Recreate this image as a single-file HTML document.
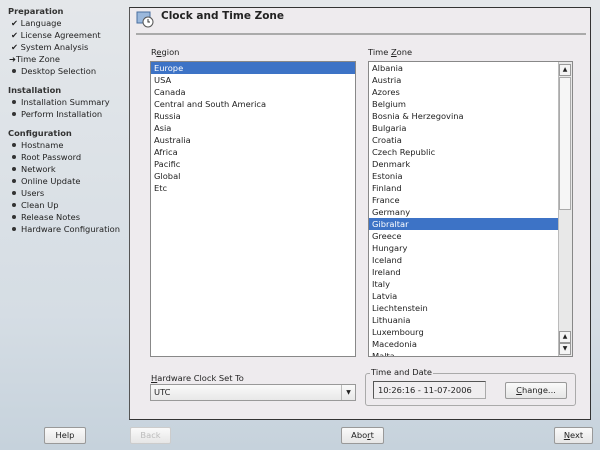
<!DOCTYPE html>
<html><head><style>
*{margin:0;padding:0;box-sizing:border-box}
body{width:600px;height:450px;position:relative;overflow:hidden;font-family:"DejaVu Sans","Liberation Sans",sans-serif;font-size:8.3px;color:#222;background:linear-gradient(#e4e7ea,#d5dde4 70%,#c6d2dc)}
.a{position:absolute;white-space:nowrap}
.side div{position:absolute;left:8px;line-height:12px}
.side b{font-weight:bold;color:#333}
.side .i{left:11px}
.side .i s{text-decoration:none;display:inline-block;width:4px;height:4px;border-radius:50%;background:#333;margin:0 5px 1px 1px;vertical-align:middle}
.panel{position:absolute;left:129px;top:7px;width:462px;height:413px;background:#eeebee;border:1px solid #333;border-left-color:#555}
.list{position:absolute;background:#fff;border:1px solid #888}
.list div{height:12px;line-height:12px;padding-left:3px}
.sel{background:#3d73c6;color:#fff}
.btn{position:absolute;height:17px;background:linear-gradient(#fafafa,#e6e6e6);border:1px solid #999;border-radius:2px;text-align:center;line-height:15px}
</style></head><body>
<div class="side">
<div style="top:5px"><b>Preparation</b></div>
<div class="i" style="top:17px">✔ Language</div>
<div class="i" style="top:29px">✔ License Agreement</div>
<div class="i" style="top:41px">✔ System Analysis</div>
<div style="top:53px;left:9px">➜Time Zone</div>
<div class="i" style="top:65px"><s></s>Desktop Selection</div>
<div style="top:84px"><b>Installation</b></div>
<div class="i" style="top:96px"><s></s>Installation Summary</div>
<div class="i" style="top:108px"><s></s>Perform Installation</div>
<div style="top:127px"><b>Configuration</b></div>
<div class="i" style="top:139px"><s></s>Hostname</div>
<div class="i" style="top:151px"><s></s>Root Password</div>
<div class="i" style="top:163px"><s></s>Network</div>
<div class="i" style="top:175px"><s></s>Online Update</div>
<div class="i" style="top:187px"><s></s>Users</div>
<div class="i" style="top:199px"><s></s>Clean Up</div>
<div class="i" style="top:211px"><s></s>Release Notes</div>
<div class="i" style="top:223px"><s></s>Hardware Configuration</div>
</div>
<div class="panel"></div>
<svg class="a" style="left:136px;top:10px" width="18" height="18"><rect x="1" y="2" width="13" height="11" fill="#9bb8dc" stroke="#4a6fa0"/><circle cx="12" cy="12" r="5" fill="#fff" stroke="#555"/><path d="M12 9v3h2" stroke="#333" fill="none"/></svg>
<div class="a" style="left:161px;top:10px;font-weight:bold;font-size:10.5px">Clock and Time Zone</div>
<div class="a" style="left:136px;top:33px;width:450px;height:2px;background:#aaa"></div>
<div class="a" style="left:151px;top:47px">R<u>e</u>gion</div>
<div class="list" style="left:150px;top:61px;width:206px;height:296px">
<div class="sel">Europe</div><div>USA</div><div>Canada</div><div>Central and South America</div><div>Russia</div><div>Asia</div><div>Australia</div><div>Africa</div><div>Pacific</div><div>Global</div><div>Etc</div></div>
<div class="a" style="left:368px;top:47px">Time <u>Z</u>one</div>
<div class="list" style="left:368px;top:61px;width:205px;height:296px;overflow:hidden">
<div>Albania</div><div>Austria</div><div>Azores</div><div>Belgium</div><div>Bosnia &amp; Herzegovina</div><div>Bulgaria</div><div>Croatia</div><div>Czech Republic</div><div>Denmark</div><div>Estonia</div><div>Finland</div><div>France</div><div>Germany</div><div class="sel" style="margin-right:14px">Gibraltar</div><div>Greece</div><div>Hungary</div><div>Iceland</div><div>Ireland</div><div>Italy</div><div>Latvia</div><div>Liechtenstein</div><div>Lithuania</div><div>Luxembourg</div><div>Macedonia</div><div>Malta</div>
<div style="position:absolute;right:0;top:0;width:14px;height:294px;background:#e8e8e8;border-left:1px solid #bbb;padding:0"></div>
<div style="position:absolute;right:1px;top:2px;width:12px;height:12px;background:#f4f4f4;border:1px solid #999;font-size:6px;text-align:center;line-height:10px;padding:0">▲</div>
<div style="position:absolute;right:1px;top:15px;width:12px;height:133px;background:#f6f6f6;border:1px solid #aaa;padding:0"></div>
<div style="position:absolute;right:1px;top:269px;width:12px;height:12px;background:#f4f4f4;border:1px solid #999;font-size:6px;text-align:center;line-height:10px;padding:0">▲</div>
<div style="position:absolute;right:1px;top:281px;width:12px;height:12px;background:#f4f4f4;border:1px solid #999;font-size:6px;text-align:center;line-height:10px;padding:0">▼</div>
</div>
<div class="a" style="left:151px;top:373px"><u>H</u>ardware Clock Set To</div>
<div class="a" style="left:150px;top:384px;width:206px;height:17px;background:linear-gradient(#fafafa,#e8e8e8);border:1px solid #999;line-height:15px;padding-left:3px">UTC<span style="position:absolute;right:0;top:0;width:14px;height:15px;border-left:1px solid #bbb;font-size:6px;text-align:center">▼</span></div>
<div class="a" style="left:365px;top:373px;width:211px;height:33px;border:1px solid #aaa;border-radius:3px"></div>
<div class="a" style="left:370px;top:367px;background:#eeebee;padding:0 1px">Time and Date</div>
<div class="a" style="left:373px;top:381px;width:113px;height:18px;background:#f0eef0;border:1px solid #aaa;border-top-color:#555;border-left-color:#555;line-height:16px;padding-left:4px">10:26:16 - 11-07-2006</div>
<div class="btn" style="left:505px;top:382px;width:62px"><u>C</u>hange...</div>
<div class="btn" style="left:44px;top:427px;width:42px">Help</div>
<div class="btn" style="left:130px;top:427px;width:41px;color:#bbb;border-color:#ccc">Back</div>
<div class="btn" style="left:341px;top:427px;width:43px">Abo<u>r</u>t</div>
<div class="btn" style="left:554px;top:427px;width:39px"><u>N</u>ext</div>
</body></html>
